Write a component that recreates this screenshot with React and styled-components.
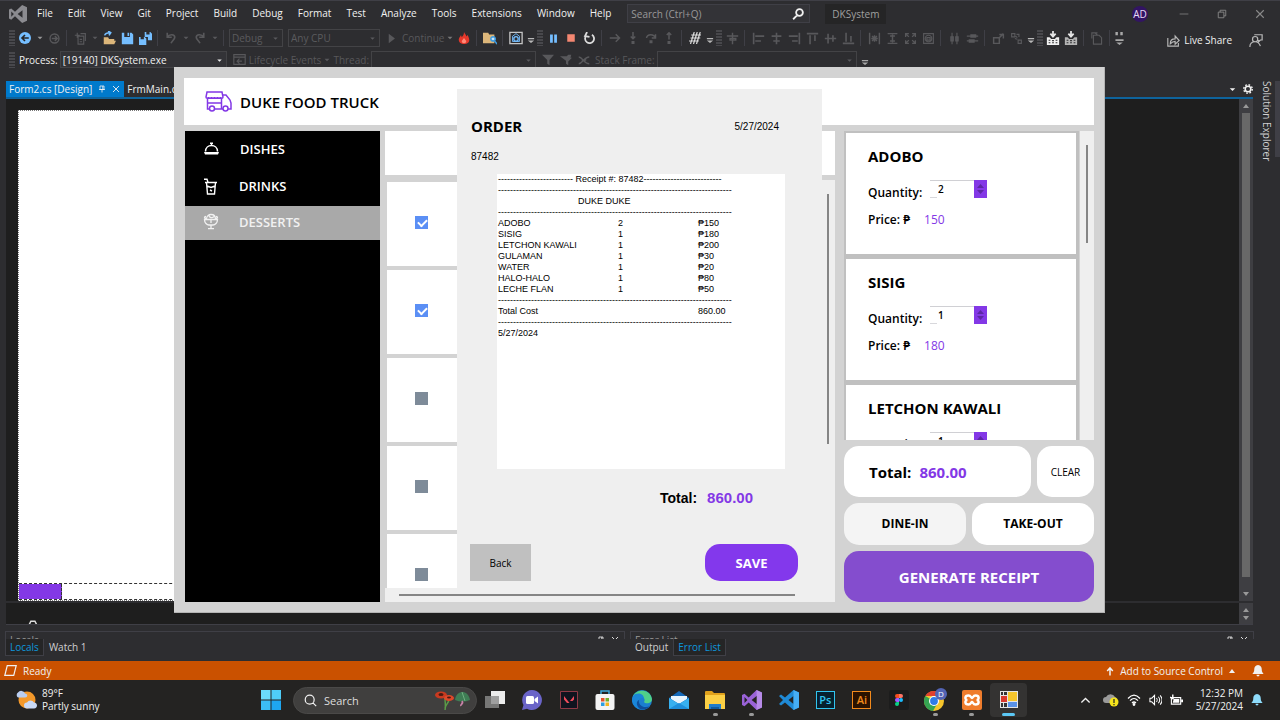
import React from "react";
import styled, { createGlobalStyle, css } from "styled-components";

const ui = '"Open Sans", "Noto Sans", sans-serif';
const arial = '"Liberation Sans", Arial, sans-serif';
const purple = "#8338e6";

const GlobalStyle = createGlobalStyle`
  * { box-sizing: border-box; }
  body { margin: 0; background: #2d2d30; font-family: ${ui}; font-size: 10px; color: #f1f1f1; }
  button, input, select { font: inherit; color: inherit; border: 0; margin: 0; padding: 0; background: none; border-radius: 0; }
  h1, h2, h3, p { margin: 0; }
`;

/* ---------- shared ---------- */

const Desktop = styled.div`
  position: relative;
  min-height: 100vh;
  display: flex;
  flex-direction: column;
  overflow: hidden;
`;

const Svg = styled.svg`
  display: block;
  flex: none;
  fill: ${(p) => (p.$solid ? "currentColor" : "none")};
  stroke: ${(p) => (p.$solid ? "none" : "currentColor")};
  stroke-width: ${(p) => p.$stroke || 1.4};
`;

const glyphs = {
  caret: { solid: true, d: "M4 6h8l-4 4z" },
  up: { solid: true, d: "M2 12h12L8 4z" },
  down: { solid: true, d: "M2 4h12l-6 8z" },
  overflow: { solid: true, d: "M3 8h10v2H3zM3 12h10l-5 4z" },
  overflowDots: { solid: true, d: "M3 0h3v4H3zM9 0h3v4H9zM3 9h10v2H3zM4 13h8l-4 3z" },
  fwd: { d: "M8 1.5a6.5 6.5 0 100 13 6.5 6.5 0 000-13zM4 8h8M8.500 4.500L12 8l-3.500 3.500", stroke: 2 },
  newItem: { d: "M5 5h7v10H5zM8 2h6v9M1 4h6M4 1v6M7 9h3M7 12h3" },
  undo: { d: "M3 1v6h6M3 7c3-5 10-4 10 0 0 3-3 4-5 8", stroke: 2.2 },
  redo: { d: "M13 1v6H7M13 7C10 2 3 3 3 7c0 3 3 4 5 8", stroke: 2.2 },
  play: { solid: true, d: "M4 1l9 7-9 7z" },
  pause: { solid: true, d: "M3 2h4v12H3zM9 2h4v12H9z" },
  stop: { solid: true, d: "M2 2h12v12H2z" },
  restart: { d: "M4 4.500a5.500 5.500 0 107-1M5 0L2.500 5 8 6", stroke: 2.2 },
  arrow: { d: "M1 8h13M9 3l5 5-5 5", stroke: 2 },
  into: { d: "M8 0v9M5 6l3 3 3-3M7 13h2v2H7z", stroke: 2 },
  over: { d: "M2 8c1-6 10-6 12 0M14 3v5H9M7 12h2v2H7z", stroke: 2 },
  out: { d: "M8 10V1M5 4l3-3 3 3M7 13h2v2H7z", stroke: 2 },
  hash: { d: "M7 0L2 16M11 0L6 16M15 0l-5 16M3 4h13M2 8h13M0 12h13", stroke: 1.6 },
  grid: { d: "M8 1v14M1 5h14M5 8h7v2H5z", stroke: 1.8 },
  alignL: { d: "M2 1v14M4 5h11M4 11h7", stroke: 2 },
  alignC: { d: "M8 1v14M2 5h12M4 11h8", stroke: 2 },
  alignR: { d: "M14 1v14M1 5h11M5 11h7", stroke: 2 },
  alignT: { d: "M1 2h14M5 4v11M11 4v7", stroke: 2 },
  alignM: { d: "M1 8h14M5 2v12M11 4v8", stroke: 2 },
  alignB: { d: "M1 14h14M5 1v11M11 5v7", stroke: 2 },
  sameW: { d: "M2 1v14M14 1v14M4 8h8M8 4v8M5 5l6 6M11 5l-6 6", stroke: 1.8 },
  sameH: { d: "M2 2h12M2 14h12M8 3v10M5 5h6M5 11h6", stroke: 1.8 },
  expand: { d: "M2 6V2h4M10 2h4v4M14 10v4h-4M6 14H2v-4M3 3l3 3M13 3l-3 3M13 13l-3-3M3 13l3-3", stroke: 1.6 },
  lockGrid: { d: "M2 2h12v12H2zM8 4a4 4 0 100 8 4 4 0 000-8zM6 7h4v3H6z" },
  hspace: { d: "M5 1v14M11 1v14M3.500 6h3v5h-3zM9.500 6h3v5h-3z" },
  vspace: { d: "M1 5h14M1 11h14M6 3.500h6v3H6zM4 9.500h6v3H4z" },
  front: { d: "M2 7h7v7H2zM9 3h5v5M14 2l-5 5", stroke: 1.8 },
  back: { d: "M2 2h4v4H2zM10 10h4v4h-4zM7 5l2 2M9 9l-3-1M8 3h3v3" },
  merge: { d: "M3 4h7l3 3v8H3zM1 8V1h7M5 1l3 3" },
  filter: { solid: true, d: "M0 1h16l-6 7v7l-3-2V8z" },
  filter2: { solid: true, d: "M0 3h9l2-2h4l-1 4h2l-5 5v5l-3-2V9z" },
  cross: { d: "M1 4c5 0 7 9 14 9M1 13c5 0 7-9 14-9M5 8h6", stroke: 1.8 },
  lifecycle: { d: "M1 2h14v12H1zM1 5h14M5 10h6M8 7l-3 3 3 3" },
  pin: { d: "M4 2h8v7H4zM9.500 2v7M2 9h12M8 9v6", stroke: 1.6 },
  close: { d: "M2 2l12 12M14 2L2 14", stroke: 1.8 },
  minimise: { d: "M1 8h14", stroke: 1.2 },
  restore: { d: "M2 5h9v9H2zM5 5V2h9v9h-3", stroke: 1.4 },
  search: { d: "M10 1.500a4.500 4.500 0 100 9 4.500 4.500 0 000-9zM7 9.500L1.500 15", stroke: 2.4 },
  lens: { d: "M7 1.500a5.500 5.500 0 100 11 5.500 5.500 0 000-11zM11 11l4 4", stroke: 1.5 },
  share: { d: "M1 5v10h13v-4M4 12c0-4 2-6 6-6V2.500L15 8l-5 4.500V9c-3 0-4 1-6 3z" },
  feedback: { d: "M4 7a3 3 0 106 0 3 3 0 10-6 0M1 16c0-4 2-6 6-6s5 2 6 5M6 2h9v6h-2l-2 2V8", stroke: 1.4 },
  parallelogram: { d: "M4 2h11l-3 12H1z", stroke: 1.5 },
  push: { d: "M8 15V3M3.500 8L8 3l4.500 5", stroke: 2.4 },
  bell: { solid: true, d: "M8 0C4.500 0 3 3 3 6c0 3-1 4-2.500 6h15C14 10 13 9 13 6c0-3-1.500-6-5-6zM6 13h4c0 3-4 3-4 0z" },
  chevron: { d: "M2 11l6-6 6 6", stroke: 1.8 },
  tray: { d: "M3 16v-6l3-6h5l3 6v6M3 10h11M6 4h5", stroke: 1.8 },
};

function Glyph({ name, size = 12, label }) {
  const g = glyphs[name];
  return (
    <Svg
      viewBox="0 0 16 16"
      width={size}
      height={size}
      $solid={g.solid}
      $stroke={g.stroke}
      role={label ? "img" : undefined}
      aria-label={label}
      aria-hidden={label ? undefined : true}
    >
      <path d={g.d} />
    </Svg>
  );
}

/* ---------- menu bar ---------- */

const MenuBar = styled.header`
  display: flex;
  align-items: center;
  height: 26px;
  padding: 0 15px 0 9px;
  border-top: 1px solid #3f3f46;
`;

const MenuList = styled.nav`
  display: flex;
  gap: 15px;
  margin-left: 10px;
`;

const MenuItem = styled.button`
  line-height: 16px;
  padding-bottom: 1px;
  white-space: nowrap;
`;

const QuickSearch = styled.label`
  display: flex;
  align-items: center;
  width: 183px;
  height: 19px;
  margin-left: 16px;
  padding: 0 5px 0 3px;
  background: #333337;
  border: 1px solid #3f3f46;
  input { flex: 1; min-width: 0; outline: 0; }
  input::placeholder { color: #999; opacity: 1; }
`;

const SolutionName = styled.span`
  margin-left: 15px;
  padding: 0 7px;
  line-height: 20px;
  background: #252526;
  color: #a0a0a0;
`;

const WindowControls = styled.div`
  display: flex;
  align-items: center;
  gap: 28px;
  margin-left: auto;
  color: #8a8a8a;
`;

const Avatar = styled.span`
  width: 16px;
  height: 16px;
  margin-right: 3px;
  border-radius: 50%;
  background: #321463;
  color: #e6dcf5;
  line-height: 16px;
  text-align: center;
`;

/* ---------- tool bars ---------- */

const ToolBar = styled.div`
  display: flex;
  align-items: center;
  height: ${(p) => p.$height || 24}px;
  padding-left: 8px;
  color: #58585b;
  white-space: nowrap;
`;

const Grip = styled.span`
  flex: none;
  width: 8px;
  height: 16px;
  padding: 0 1px;
  background: radial-gradient(circle at 1px 1px, #48484c 1px, transparent 1px) 0 0 / 2px 3px content-box;
`;

const ToolButton = styled.button`
  flex: none;
  display: flex;
  align-items: center;
  justify-content: center;
  width: ${(p) => (p.$narrow ? 11 : 18)}px;
  height: 18px;
  color: ${(p) => p.$color || "inherit"};
`;

const Separator = styled.span`
  flex: none;
  width: 8px;
  height: 16px;
  border-right: 4px solid transparent;
  border-left: 3px solid transparent;
  background: #3f3f46;
  background-clip: padding-box;
`;

const SelectFrame = styled.div`
  position: relative;
  flex: none;
  width: ${(p) => p.$width}px;
  height: ${(p) => p.$height || 18}px;
  margin-left: ${(p) => p.$gap || 5}px;
  border: 1px solid #434346;
  color: ${(p) => (p.$active ? "#f1f1f1" : "#5b5b5e")};
  background: ${(p) => (p.$active ? "#333337" : "transparent")};
  select { appearance: none; width: 100%; height: 100%; padding-left: 2px; opacity: 1; outline: 0; line-height: 14px; display: block; }
  svg { position: absolute; right: 2px; top: 4px; pointer-events: none; }
`;

const ToolLabel = styled.span`
  flex: none;
  margin-left: ${(p) => p.$gap || 0}px;
  color: ${(p) => (p.$active ? "#f1f1f1" : "inherit")};
`;

const ToolEnd = styled.div`
  display: flex;
  align-items: center;
  gap: 4px;
  margin-left: auto;
  padding: 4px 17px 0 0;
  color: #f1f1f1;
  svg { color: #b8b8b8; }
  svg:last-child { margin-left: 13px; }
`;

function ToolSelect({ label, value, ...rest }) {
  return (
    <SelectFrame {...rest}>
      <select aria-label={label} defaultValue={value}>
        <option>{value}</option>
      </select>
      <Glyph name="caret" size={9} />
    </SelectFrame>
  );
}

const BackIcon = () => (
  <svg width="12" height="12" viewBox="0 0 16 16" aria-hidden="true">
    <circle cx="8" cy="8" r="8" fill="#75beff" />
    <path d="M13 8H4M8 4L4 8l4 4" stroke="#252526" strokeWidth="2.200" fill="none" />
  </svg>
);
const OpenIcon = () => (
  <svg width="14" height="14" viewBox="0 0 16 16" aria-hidden="true">
    <path d="M2 15V7h5l1 2h6v2H6l-2 4zM4 15l2-4h10l-2 4z" fill="#dcb67a" />
    <path d="M3 5c1-3 4-3 6-3M7 0l3 2-2 3" stroke="#75beff" strokeWidth="1.800" fill="none" />
  </svg>
);
const SaveIcon = ({ all }) => (
  <svg width="13" height="13" viewBox="0 0 16 16" aria-hidden="true" fill="#75beff">
    {all ? (
      <path d="M7 0h2v3h4V0h1l2 2v8h-5V6H7zM0 6h2v3h4V6h1l2 2v8H0z" />
    ) : (
      <path d="M1 1h3v5h7V1h2l2 2v12H1zM8 1h2v4H8z" />
    )}
  </svg>
);
const FlameIcon = () => (
  <svg width="12" height="14" viewBox="0 0 16 16" aria-hidden="true">
    <path d="M8 0c1 3 3 3 3 6l2-2c1 3 2 4 2 7 0 3-3 5-7 5s-7-2-7-6c0-2 2-4 3-6l1 3c2-2 3-4 3-7z" fill="#e5382b" />
    <path d="M8 8l3 4c0 4-6 4-6 0z" fill="#ff8a78" />
  </svg>
);
const FolderFindIcon = () => (
  <svg width="14" height="14" viewBox="0 0 16 16" aria-hidden="true">
    <path d="M0 2h6l1 2h6v10H0z" fill="#dcb67a" />
    <path d="M9 9a2.500 2.500 0 105 0 2.500 2.500 0 10-5 0M13 11l3 4" stroke="#3d9be0" strokeWidth="1.800" fill="#cfe6f8" />
  </svg>
);
const CameraIcon = () => (
  <svg width="14" height="14" viewBox="0 0 16 16" aria-hidden="true" fill="none">
    <path d="M1 1.500h14v13H1z" stroke="#c5c5c5" strokeWidth="1.500" />
    <path d="M4 12V6l4-3 4 3v6z" stroke="#75beff" />
    <circle cx="8" cy="9" r="2.500" stroke="#75beff" strokeWidth="1.500" />
  </svg>
);
const DepositIcon = ({ faint }) => (
  <svg width="14" height="14" viewBox="0 0 16 16" aria-hidden="true">
    <path d="M8 0v6M5 3l3 3.500L11 3" stroke="#e6e6e6" strokeWidth="2" fill="none" />
    <path d="M1 7h3l2 2h4l2-2h3v9H1z" fill={faint ? "#b4b4b4" : "#f1f1f1"} />
    <path d="M3 10.500h2M7 11h2M11 10.500h2M3 13.500h2M7 13.500h2M11 13.500h2" stroke="#2d2d30" strokeWidth="1.200" />
  </svg>
);

const menus = ["File", "Edit", "View", "Git", "Project", "Build", "Debug", "Format", "Test", "Analyze", "Tools", "Extensions", "Window", "Help"];

const layoutTools = [
  "grid", "|", "alignL", "alignC", "alignR", "alignT", "alignM", "alignB", "|",
  "sameW", "sameH", "expand", "lockGrid", "|", "hspace", "vspace", "|", "front", "back",
];

function Tool({ name, narrow, color, children, size }) {
  return (
    <ToolButton $narrow={narrow} $color={color} aria-label={name}>
      {children || <Glyph name={name} size={size || (narrow ? 10 : 13)} />}
    </ToolButton>
  );
}

function IdeBars() {
  return (
    <>
      <MenuBar>
        <svg width="18" height="18" viewBox="0 0 24 24" aria-label="Visual Studio" role="img">
          <path d="M17.500 0L24 3v18l-6.500 3L8 15l-5 4.500-3-1.500V6l3-1.500L8 9zM18 7l-6.500 5 6.500 5zM3 8.500v7L6.500 12z" fill="#8b8b90" fillRule="evenodd" />
        </svg>
        <MenuList>
          {menus.map((m) => (
            <MenuItem key={m}>{m}</MenuItem>
          ))}
        </MenuList>
        <QuickSearch>
          <input type="text" aria-label="Search" placeholder="Search (Ctrl+Q)" />
          <Glyph name="search" size={12} />
        </QuickSearch>
        <SolutionName>DKSystem</SolutionName>
        <WindowControls>
          <Avatar>AD</Avatar>
          <button aria-label="Minimise"><Glyph name="minimise" size={10} /></button>
          <button aria-label="Restore"><Glyph name="restore" size={10} /></button>
          <button aria-label="Close"><Glyph name="close" size={10} /></button>
        </WindowControls>
      </MenuBar>
      <ToolBar>
        <Grip />
        <ToolButton aria-label="Back"><BackIcon /></ToolButton>
        <Tool name="caret" narrow color="#999" />
        <Tool name="fwd" size={11} />
        <Separator />
        <Tool name="newItem" />
        <Tool name="caret" narrow />
        <ToolButton aria-label="Open"><OpenIcon /></ToolButton>
        <ToolButton aria-label="Save"><SaveIcon /></ToolButton>
        <ToolButton aria-label="Save all"><SaveIcon all /></ToolButton>
        <Separator />
        <Tool name="undo" size={12} />
        <Tool name="caret" narrow />
        <Tool name="redo" size={12} />
        <Tool name="caret" narrow />
        <Separator />
        <ToolSelect label="Configuration" value="Debug" $width={54} $gap={1} />
        <ToolSelect label="Platform" value="Any CPU" $width={92} />
        <ToolLabel $gap={2}><Tool name="play" size={11} /></ToolLabel>
        <ToolLabel $gap={2}>Continue</ToolLabel>
        <Tool name="caret" narrow color="#777" />
        <ToolButton aria-label="Hot reload"><FlameIcon /></ToolButton>
        <Separator />
        <ToolButton aria-label="Find in files"><FolderFindIcon /></ToolButton>
        <Separator />
        <ToolButton aria-label="Snapshot"><CameraIcon /></ToolButton>
        <Tool name="overflow" narrow color="#b8b8b8" />
        <Grip />
        <Tool name="pause" color="#75beff" size={11} />
        <Tool name="stop" color="#f48771" size={10} />
        <Tool name="restart" color="#dcdcdc" />
        <Separator />
        {["arrow", "into", "over", "out"].map((n) => <Tool key={n} name={n} size={12} />)}
        <Separator />
        <Tool name="hash" color="#dcdcdc" size={12} />
        <Tool name="overflow" narrow color="#b8b8b8" />
        <Grip />
        {layoutTools.map((n, i) => (n === "|" ? <Separator key={i} /> : <Tool key={i} name={n} size={13} />))}
        <Tool name="overflow" narrow color="#b8b8b8" />
        <Grip />
        <ToolButton aria-label="Publish"><DepositIcon /></ToolButton>
        <ToolButton aria-label="Publish all"><DepositIcon faint /></ToolButton>
        <Separator />
        <Tool name="merge" />
        <Separator />
        <Tool name="overflowDots" narrow color="#a8a8a8" size={13} />
        <ToolEnd>
          <Glyph name="share" size={13} />
          <button>Live Share</button>
          <Glyph name="feedback" size={14} />
        </ToolEnd>
      </ToolBar>
      <ToolBar $height={19}>
        <Grip />
        <ToolLabel $gap={3} $active>Process:</ToolLabel>
        <ToolSelect label="Process" value="[19140] DKSystem.exe" $width={167} $height={17} $gap={2} $active />
        <ToolLabel $gap={4}><Tool name="lifecycle" /></ToolLabel>
        <ToolLabel>Lifecycle Events</ToolLabel>
        <Tool name="caret" narrow />
        <ToolLabel $gap={1}>Thread:</ToolLabel>
        <ToolSelect label="Thread" value="" $width={165} $height={17} $gap={2} />
        <ToolLabel $gap={3}><Tool name="filter" size={12} /></ToolLabel>
        <Tool name="filter2" size={12} />
        <Tool name="cross" size={12} />
        <ToolLabel $gap={2}>Stack Frame:</ToolLabel>
        <ToolSelect label="Stack Frame" value="" $width={200} $height={17} $gap={2} />
        <ToolLabel $gap={3}><Tool name="overflow" narrow color="#a8a8a8" /></ToolLabel>
      </ToolBar>
    </>
  );
}

/* ---------- editor ---------- */

const WorkArea = styled.div`
  flex: 1;
  display: flex;
  min-height: 544px;
  padding-left: 6px;
  margin-top: 12px;
`;

const Documents = styled.main`
  flex: 1;
  display: flex;
  flex-direction: column;
  min-width: 0;
`;

const TabStrip = styled.div`
  display: flex;
  align-items: center;
  height: 18px;
  border-bottom: 2px solid #0e639c;
  font-size: 10px;
  line-height: 16px;
`;

const DocTab = styled.button`
  display: flex;
  align-items: center;
  gap: 6px;
  height: 16px;
  padding: 0 4px 0 3px;
  background: ${(p) => (p.$active ? "#007acc" : "transparent")};
`;

const TabTools = styled.div`
  display: flex;
  align-items: center;
  gap: 5px;
  margin-left: auto;
`;

const Designer = styled.div`
  flex: 1;
  display: flex;
  justify-content: space-between;
  background: #1e1e1e;
`;

const FormSurface = styled.div`
  width: 75%;
  display: flex;
  flex-direction: column;
  margin: 11px 0 0 12px;
  border: 1px dotted #777;
  border-right: 0;
  background: #fff;
`;

const FormStrip = styled.div`
  height: 17px;
  margin-top: auto;
  border: dashed #333;
  border-width: 1px 0;
  &::before {
    content: "";
    display: block;
    width: 42px;
    height: 100%;
    background: ${purple};
    border-right: 1px dashed #333;
  }
`;

const VScroll = styled.div`
  display: flex;
  flex-direction: column;
  align-items: center;
  justify-content: space-between;
  width: 14px;
  padding: 3px 0;
  background: #3e3e42;
  color: #999;
  i { flex: 1; width: 8px; margin: 3px 0 13px; background: #686868; }
`;

const Tray = styled.div`
  display: flex;
  justify-content: space-between;
  height: 24px;
  overflow: hidden;
  background: #1e1e1e;
  border-top: 2px solid #2d2d30;
  border-bottom: 1px solid #3f3f46;
`;

const TrayItem = styled.span`
  margin: 15px 0 0 20px;
  color: #ddd;
`;

const Rail = styled.aside`
  width: 27px;
  padding-left: 6px;
`;

const RailTab = styled.button`
  writing-mode: vertical-rl;
  width: 21px;
  height: 76px;
  line-height: 14px;
  text-align: left;
  border-right: 5px solid #3f3f46;
  color: #d0d0d0;
  font-size: 10px;
  white-space: nowrap;
`;

const Panels = styled.section`
  display: grid;
  grid-template-columns: 620fr 624fr;
  gap: 5px;
  height: 36px;
  padding: 6px 26px 0 5px;
`;

const Panel = styled.div`
  min-width: 0;
`;

const PanelTitle = styled.div`
  display: flex;
  justify-content: space-between;
  height: 8px;
  padding: 0 5px 0 4px;
  overflow: hidden;
  border: solid #3f3f46;
  border-width: 1px 1px 0;
  line-height: 17px;
  color: #999;
  span { display: flex; gap: 6px; padding-top: 4px; color: #f1f1f1; }
`;

const PanelTabs = styled.div`
  display: flex;
`;

const PanelTab = styled.button`
  height: 17px;
  padding: 0 4px;
  line-height: 15px;
  color: ${(p) => (p.$active ? "#0e97dd" : "#d0d0d0")};
  background: ${(p) => (p.$active ? "#252526" : "transparent")};
  border: 1px solid ${(p) => (p.$active ? "#3f3f46" : "transparent")};
  border-top: 0;
`;

function PanelBox({ title, tabs, active }) {
  return (
    <Panel>
      <PanelTitle>
        {title}
        <span><Glyph name="pin" size={8} /><Glyph name="close" size={8} /></span>
      </PanelTitle>
      <PanelTabs>
        {tabs.map((t) => <PanelTab key={t} $active={t === active}>{t}</PanelTab>)}
      </PanelTabs>
    </Panel>
  );
}

const StatusBar = styled.div`
  display: flex;
  align-items: center;
  gap: 6px;
  height: 19px;
  padding: 0 16px 0 4px;
  background: #ca5100;
  button { display: flex; align-items: center; gap: 5px; }
  button:first-of-type { margin-left: auto; margin-right: 10px; }
`;

/* ---------- order window ---------- */

const AppWindow = styled.div`
  position: absolute;
  top: 67px;
  left: 174px;
  right: 175px;
  padding: 11px 11px 11px 10px;
  background: #d3d3d3;
  box-shadow: inset -1px -1px #b4b4b4;
  color: #000;
`;

const AppHeader = styled.div`
  display: flex;
  align-items: center;
  gap: 8px;
  height: 47px;
  padding-left: 21px;
  background: #fff;
  h1 { font-size: 15px; line-height: 20px; font-weight: 600; }
`;

const AppBody = styled.div`
  display: flex;
  height: 471px;
  margin: 6px 0 0 1px;
`;

const SideBar = styled.nav`
  width: 195px;
  flex: none;
  background: #000;
`;

const SideItem = styled.button`
  display: flex;
  align-items: center;
  gap: 20px;
  width: 100%;
  height: ${(p) => p.$height || 37}px;
  padding: 0 0 3px 18px;
  font-size: 13px;
  font-weight: 600;
  color: ${(p) => (p.$active ? "#f1f1f1" : "#fff")};
  background: ${(p) => (p.$active ? "#a9a9a9" : "transparent")};
`;

const Menu = styled.div`
  flex: 1;
  display: flex;
  flex-direction: column;
  min-width: 0;
  margin: 0 9px 0 5px;
`;

const MenuHead = styled.div`
  height: 44px;
  margin-bottom: 5px;
  background: #fff;
`;

const MenuScroller = styled.div`
  flex: 1;
  display: flex;
  min-height: 0;
`;

const ProductList = styled.div`
  flex: 1;
  display: flex;
  flex-direction: column;
  gap: 4px;
  padding: 2px 0 0 2px;
  overflow: hidden;
`;

const ProductCard = styled.div`
  flex: none;
  display: flex;
  align-items: center;
  height: 84px;
  padding: 0 0 3px 28px;
  background: #fff;
`;

const Tick = styled.input`
  appearance: none;
  position: relative;
  width: 13px;
  height: 13px;
  background: #7e8b99;
  &:checked { background: #5b8ff5; }
  &:checked::after {
    content: "";
    position: absolute;
    left: 3px;
    top: 3px;
    width: 7px;
    height: 4px;
    border: solid #fff;
    border-width: 0 0 2px 2px;
    transform: rotate(-45deg);
  }
`;

const Track = styled.div`
  flex: none;
  background: #efefef;
  ${(p) =>
    p.$across
      ? css`height: 14px; padding: 6px 40px 6px 14px;`
      : css`width: 14px; padding: ${p.$pad} 6px 0;`}
  &::before {
    content: "";
    display: block;
    width: ${(p) => (p.$across ? "100%" : "2px")};
    height: ${(p) => (p.$across ? "2px" : p.$thumb + "px")};
    background: #858585;
  }
`;

const Cart = styled.div`
  flex: none;
  width: 250px;
  display: flex;
  flex-direction: column;
  gap: 6px;
`;

const CartScroller = styled.div`
  flex: 1;
  display: flex;
  min-height: 0;
  overflow: hidden;
`;

const CartList = styled.div`
  flex: 1;
  display: flex;
  flex-direction: column;
  gap: 5px;
  margin-right: 1px;
  padding: 2px 3px 0 2px;
  overflow: hidden;
  background: #c0c0c0;
`;

const CartCard = styled.div`
  flex: none;
  height: 121px;
  padding: 12px 0 0 22px;
  background: #fff;
  font-size: 12px;
  font-weight: 600;
  h3 { font-size: 15px; line-height: 22px; font-weight: 700; }
`;

const QuantityRow = styled.label`
  display: flex;
  align-items: center;
  height: 20px;
  margin-top: 15px;
`;

const QuantityLabel = styled.span`
  width: 62px;
`;

const QuantityField = styled.span`
  display: flex;
  width: 57px;
  height: 18px;
  margin-bottom: 6px;
  background: linear-gradient(#d0d0d4, #d0d0d4) 0 0 / 44px 1px no-repeat, linear-gradient(#d8d8dc, #d8d8dc) 0 100% / 7px 1px no-repeat;
  input { appearance: none; width: 44px; padding-left: 8px; font-size: 10px; outline: 0; }
  span { display: flex; flex-direction: column; align-items: center; justify-content: center; gap: 2px; width: 13px; background: ${purple}; color: #5c27a5; }
`;

const Price = styled.p`
  display: flex;
  gap: 14px;
  margin-top: 8px;
  line-height: 20px;
  b { font-weight: 400; color: ${purple}; }
`;

const CartRow = styled.div`
  flex: none;
  display: flex;
  gap: 6px;
`;

const TotalCard = styled.div`
  flex: 1;
  display: flex;
  align-items: center;
  gap: 8px;
  height: 51px;
  padding-left: 25px;
  border-radius: 15px;
  background: #fff;
  font-size: 15px;
  font-weight: 700;
  b { font-weight: inherit; color: ${purple}; }
`;

const RoundButton = styled.button`
  flex: ${(p) => (p.$width ? "none" : 1)};
  width: ${(p) => (p.$width ? p.$width + "px" : "auto")};
  height: ${(p) => p.$height}px;
  border-radius: 15px;
  background: ${(p) => p.$bg || "#fff"};
  color: ${(p) => p.$color || "#000"};
  font-size: ${(p) => p.$size || 12}px;
  font-weight: ${(p) => p.$weight || 700};
  line-height: 20px;
`;

const Dialog = styled.section`
  position: absolute;
  top: 22px;
  left: 0;
  right: 0;
  width: 365px;
  height: 502px;
  margin: 0 auto;
  padding: 27px 24px 0 14px;
  display: flex;
  flex-direction: column;
  background: #efefef;
  font-size: 10px;
`;

const DialogHead = styled.div`
  display: flex;
  align-items: center;
  justify-content: space-between;
  padding-right: 19px;
  font-family: ${arial};
  h2 { font: 700 15px/20px ${ui}; }
`;

const OrderNumber = styled.p`
  margin-top: 15px;
  font-family: ${arial};
  line-height: 12px;
`;

const Receipt = styled.div`
  width: 288px;
  height: 295px;
  margin: 11px 0 0 26px;
  padding-left: 1px;
  background: #fff;
  font: 9px/11px ${arial};
  white-space: pre;
`;

const ReceiptTable = styled.table`
  border-collapse: collapse;
  td { padding: 0; height: 11px; line-height: 11px; }
  td:first-child { width: 120px; }
  td:nth-child(2) { width: 80px; }
`;

const Brand = styled.p`
  padding-left: 80px;
`;

const TotalLine = styled.p`
  display: flex;
  justify-content: flex-end;
  gap: 10px;
  margin: 19px 45px 0 0;
  font: 700 14px/20px ${arial};
  b { font-size: 15px; color: ${purple}; }
`;

const DialogActions = styled.div`
  display: flex;
  align-items: center;
  justify-content: space-between;
  margin: 36px 0 0 -1px;
`;

const BackButton = styled.button`
  width: 61px;
  height: 37px;
  background: #c0c0c0;
`;

const dashes = (n) => "-".repeat(n);

const order = [
  ["ADOBO", 2, 150],
  ["SISIG", 1, 180],
  ["LETCHON KAWALI", 1, 200],
  ["GULAMAN", 1, 30],
  ["WATER", 1, 20],
  ["HALO-HALO", 1, 80],
  ["LECHE FLAN", 1, 50],
];

const TruckIcon = () => (
  <svg width="27" height="21" viewBox="0 0 27 21" fill="none" stroke="#8338e6" strokeWidth="1.500" aria-hidden="true">
    <path d="M2 1h15l1 5c0 1.500-2.500 1.500-2.500 0 0 1.500-3 1.500-3 0 0 1.500-3 1.500-3 0 0 1.500-3 1.500-3 0 0 1.500-3 1.500-3 0C3.500 7.500 1 7.500 1 6z" />
    <path d="M2.500 8v10h2M9.500 18h8.500M16.500 7v11M2.500 12h14M17 4h4l4 5 1 3v6h-3" />
    <circle cx="7" cy="17.500" r="2.500" />
    <circle cx="20.500" cy="17.500" r="2.500" />
  </svg>
);
const DishIcon = () => (
  <svg width="17" height="14" viewBox="0 0 17 14" fill="none" stroke="currentColor" strokeWidth="1.500" aria-hidden="true">
    <path d="M2.500 9.500c0-8 12-8 12 0M8.500 3V1M7 1.200h3" />
    <path d="M1 10h15l-1 2.500H2z" fill="currentColor" stroke="none" />
  </svg>
);
const DrinkIcon = () => (
  <svg width="16" height="17" viewBox="0 0 16 17" fill="none" stroke="currentColor" strokeWidth="1.400" aria-hidden="true">
    <path d="M1 1.200h3l1 3M2 4.500h12M3.500 4.500L4.500 16h7l1-11.500M4 8l4 1.500 4-1.500M7 12l2 1" />
  </svg>
);
const DessertIcon = () => (
  <svg width="16" height="17" viewBox="0 0 16 17" fill="none" stroke="currentColor" strokeWidth="1.300" aria-hidden="true">
    <path d="M3.500 6c0-6 9-6 9 0M1.500 6.500h13c0 3.500-2.500 5.500-4.500 5.500H6c-2 0-4.500-2-4.500-5.500zM8 12v3.500M5 15.700h6M6 2.500c0 2 3 3 5 1M8 7v3" />
    <path d="M3 5.500c-2 0-2-2 0-2M13 5.500c2 0 2-2 0-2" />
  </svg>
);
const ArrowPair = () => (
  <span aria-hidden="true">
    <svg width="7" height="4" viewBox="0 0 7 4" fill="currentColor"><path d="M0 4h7L3.500 0z" /></svg>
    <svg width="7" height="4" viewBox="0 0 7 4" fill="currentColor"><path d="M0 0h7L3.500 4z" /></svg>
  </span>
);

function OrderWindow() {
  return (
    <AppWindow>
      <AppHeader>
        <TruckIcon />
        <h1>DUKE FOOD TRUCK</h1>
      </AppHeader>
      <AppBody>
        <SideBar>
          <SideItem $height={38}><DishIcon />DISHES</SideItem>
          <SideItem><DrinkIcon />DRINKS</SideItem>
          <SideItem $height={34} $active><DessertIcon />DESSERTS</SideItem>
        </SideBar>
        <Menu>
          <MenuHead />
          <MenuScroller>
            <ProductList>
              {[true, true, false, false, false].map((on, i) => (
                <ProductCard key={i}>
                  <Tick type="checkbox" defaultChecked={on} aria-label={`Product ${i + 1}`} />
                </ProductCard>
              ))}
            </ProductList>
            <Track $pad="14px" $thumb={250} />
          </MenuScroller>
          <Track $across />
        </Menu>
        <Cart>
          <CartScroller>
            <CartList>
              {order.slice(0, 3).map(([name, qty, price]) => (
                <CartCard key={name}>
                  <h3>{name}</h3>
                  <QuantityRow>
                    <QuantityLabel>Quantity:</QuantityLabel>
                    <QuantityField>
                      <input type="text" defaultValue={qty} />
                      <ArrowPair />
                    </QuantityField>
                  </QuantityRow>
                  <Price>Price: ₱<b>{price}</b></Price>
                </CartCard>
              ))}
            </CartList>
            <Track $pad="14px" $thumb={98} />
          </CartScroller>
          <CartRow>
            <TotalCard>Total:<b>860.00</b></TotalCard>
            <RoundButton $width={57} $height={51} $size={10} $weight={400}>CLEAR</RoundButton>
          </CartRow>
          <CartRow>
            <RoundButton $height={42} $bg="#f4f4f4">DINE-IN</RoundButton>
            <RoundButton $height={42}>TAKE-OUT</RoundButton>
          </CartRow>
          <CartRow>
            <RoundButton $height={51} $bg="#844dce" $color="#fff" $size={15}>GENERATE RECEIPT</RoundButton>
          </CartRow>
        </Cart>
      </AppBody>
      <Dialog aria-label="Order">
        <DialogHead>
          <h2>ORDER</h2>
          <span>5/27/2024</span>
        </DialogHead>
        <OrderNumber>87482</OrderNumber>
        <Receipt>
          <p>{dashes(25)} Receipt #: 87482{dashes(26)}</p>
          <p>{dashes(78)}</p>
          <Brand>DUKE DUKE</Brand>
          <p>{dashes(78)}</p>
          <ReceiptTable>
            <tbody>
              {order.map(([name, qty, price]) => (
                <tr key={name}>
                  <td>{name}</td>
                  <td>{qty}</td>
                  <td>₱{price}</td>
                </tr>
              ))}
            </tbody>
          </ReceiptTable>
          <p>{dashes(78)}</p>
          <ReceiptTable>
            <tbody>
              <tr>
                <td>Total Cost</td>
                <td />
                <td>860.00</td>
              </tr>
            </tbody>
          </ReceiptTable>
          <p>{dashes(78)}</p>
          <p>5/27/2024</p>
        </Receipt>
        <TotalLine>Total:<b>860.00</b></TotalLine>
        <DialogActions>
          <BackButton>Back</BackButton>
          <RoundButton $width={93} $height={37} $bg="#8338ec" $color="#fff" $size={13}>SAVE</RoundButton>
        </DialogActions>
      </Dialog>
    </AppWindow>
  );
}

/* ---------- task bar ---------- */

const TaskBar = styled.footer`
  display: flex;
  align-items: center;
  height: 40px;
  padding: 0 17px 0 15px;
  background: #242322;
`;

const Weather = styled.button`
  display: flex;
  align-items: center;
  gap: 5px;
  width: 246px;
  line-height: 13px;
  text-align: left;
`;

const SearchPill = styled.label`
  display: flex;
  align-items: center;
  gap: 7px;
  width: 184px;
  height: 27px;
  margin-left: 12px;
  padding: 0 6px 0 10px;
  border-radius: 14px;
  background: #403f3e;
  border: 1px solid #4a4948;
  input { flex: 1; min-width: 0; font-size: 11px; outline: 0; }
  input::placeholder { color: #ddd; opacity: 1; }
`;

const Apps = styled.div`
  display: grid;
  grid-template-columns: repeat(15, 1fr);
  width: 550px;
`;

const AppButton = styled.button`
  position: relative;
  display: flex;
  align-items: center;
  justify-content: center;
  height: 34px;
  border-radius: 4px;
  background: ${(p) => (p.$state === "active" ? "#343332" : "transparent")};
  &::after {
    content: "";
    position: absolute;
    bottom: 1px;
    width: ${(p) => (p.$state === "active" ? 13 : 5)}px;
    height: 3px;
    border-radius: 2px;
    background: ${(p) => (p.$state === "active" ? "#5cc8f5" : p.$state === "open" ? "#999" : "transparent")};
  }
`;

const SystemTray = styled.div`
  display: flex;
  align-items: center;
  gap: 8px;
  margin-left: auto;
  > svg:first-child { margin-right: 4px; }
`;

const Clock = styled.time`
  margin-left: 5px;
  line-height: 13px;
  text-align: right;
`;

const BlueBell = styled.span`
  color: #8fdcfb;
`;

const Tile = styled.span`
  width: 19px;
  height: 18px;
  border: 1px solid ${(p) => p.$color};
  background: ${(p) => p.$bg};
  color: ${(p) => p.$color};
  font-size: 11px;
  font-weight: 600;
  line-height: 15px;
`;

const box = { width: 20, height: 20, viewBox: "0 0 20 20", "aria-hidden": true };

const taskApps = [
  ["Task view", null, <svg {...box}><path d="M6 1h14v13H6z" fill="#ececec" /><path d="M0 6h14v12H0z" fill="#8c8c8c" fillOpacity=".8" /></svg>],
  ["Chat", null, <svg {...box}><path d="M10 0a10 10 0 11-5 18.700L0 20l1.500-5A10 10 0 0110 0z" fill="#6a64c8" /><rect x="4" y="6" width="8" height="8" rx="1.500" fill="#fff" /><path d="M12.500 9l3.500-2.500v7L12.500 11z" fill="#fff" /></svg>],
  ["Valorant", null, <svg {...box}><path d="M1.500 1.500h17v17h-17z" fill="#10141f" stroke="#8e3a46" /><path d="M5 6l5.500 7H8L5 9.500zM15 6v3.500L13.500 11H11z" fill="#f04c5c" /></svg>],
  ["Store", null, <svg {...box}><path d="M6 4V1h8v3" stroke="#3ba7d8" strokeWidth="1.500" fill="none" /><rect x="0.5" y="4" width="19" height="16" rx="2" fill="#f3f3f3" /><path d="M6 8h3.500v3.500H6z" fill="#e2502a" /><path d="M10.500 8H14v3.500h-3.500z" fill="#6fae2c" /><path d="M6 12.500h3.500V16H6z" fill="#2b9de0" /><path d="M10.500 12.500H14V16h-3.500z" fill="#f2b51d" /></svg>],
  ["Edge", null, <svg {...box}><circle cx="10" cy="10" r="10" fill="#1b7fcf" /><path d="M1 6C4-1 18-2 20 9c0 5-7 5-8 3 2-3-1-6-4-6S2 8 1 6z" fill="#4fd08a" /><path d="M1 6c3-4 11-3 11 3-2-2-5-1-5 2 0 4 5 7 11 5-4 6-16 5-18-5 0-2 0-3 1-5z" fill="#1a86d9" /><path d="M7 10c-1 5 5 9 11 6-3 4-8 4-10 3-4-3-4-8-1-9z" fill="#0f4f9c" /></svg>],
  ["Mail", null, <svg {...box}><path d="M0 8l10-7 10 7v11H0z" fill="#1468b8" /><path d="M2 6h16v3l-8 5-8-5z" fill="#e8f4fd" /><path d="M0 8l10 6 10-6v11H0z" fill="#37b0f0" /><path d="M0 19l10-6 10 6z" fill="#1f8fdc" /></svg>],
  ["Files", "open", <svg {...box}><path d="M0 2c0-1 1-1 1-1h6l2 2h10c1 0 1 1 1 1v14H0z" fill="#e0a11c" /><path d="M0 5h20v14H0z" fill="#fbcf45" /><path d="M4 14h12v5H4z" fill="#1f7ccb" /><path d="M6 17h8v2H6z" fill="#0f5a9e" /></svg>],
  ["Visual Studio", "open", <svg {...box} viewBox="0 0 24 24"><path d="M17.500 0L24 3v18l-6.500 3L8 15l-5 4.500-3-1.500V6l3-1.500L8 9zM18 7l-6.500 5 6.500 5zM3 8.500v7L6.500 12z" fill="#9a62d8" fillRule="evenodd" /><path d="M17.500 0L24 3v18l-6.500 3z" fill="#c39cf0" fillOpacity=".7" /></svg>],
  ["VS Code", null, <svg {...box}><path d="M14.500 0L20 2.500v15L14.500 20 6 12.500 2 15.500l-2-1.500 4-4-4-4 2-1.500 4 3zM14.500 6L9.500 10l5 4z" fill="#1f8ad6" fillRule="evenodd" /><path d="M14.500 0L20 2.500v15L14.500 20z" fill="#46aef5" /></svg>],
  ["Photoshop", null, <Tile $color="#31c5f0" $bg="#06202e">Ps</Tile>],
  ["Illustrator", null, <Tile $color="#f28a1c" $bg="#2b1200">Ai</Tile>],
  ["Figma", null, <svg {...box}><rect width="20" height="20" rx="3" fill="#1c1c1c" /><path d="M8 4h2v4H8a2 2 0 010-4z" fill="#f24e1e" /><path d="M10 4h2a2 2 0 010 4h-2z" fill="#ff7262" /><path d="M8 8h2v4H8a2 2 0 010-4z" fill="#a259ff" /><circle cx="12" cy="10" r="2" fill="#1abcfe" /><path d="M8 12h2v2a2 2 0 11-2-2z" fill="#0acf83" /></svg>],
  ["Chrome", "open", <svg width="24" height="24" viewBox="0 0 24 24" aria-hidden="true"><circle cx="11" cy="13" r="10" fill="#f7c52b" /><path d="M2.300 8A10 10 0 0010 23l4-7-3-3z" fill="#35a452" /><path d="M2.300 8A10 10 0 0119.700 8H11z" fill="#e0402f" /><circle cx="11" cy="13" r="5" fill="#fff" /><circle cx="11" cy="13" r="3.900" fill="#2e7ce8" /><circle cx="18" cy="6" r="6" fill="#5364b4" /><text x="18" y="9" fontSize="8" fill="#fff" textAnchor="middle">D</text></svg>],
  ["XAMPP", "open", <svg {...box}><rect width="20" height="20" rx="2" fill="#ef7c2c" /><path d="M6.500 5.500c-4 0-4 4.500-1 4.500-3 0-3 4.500 1 4.500 2.500 0 2.500-2.500 3.500-2.500s1 2.500 3.500 2.500c4 0 4-4.500 1-4.500 3 0 3-4.500-1-4.500C11 5.500 11 8 10 8S9 5.500 6.500 5.500z" fill="none" stroke="#fff" strokeWidth="2.400" /></svg>],
  ["DKSystem", "active", <svg {...box}><path d="M1 1h18v17H1z" fill="#e4e4e4" /><path d="M2 6h6v6H2z" fill="#d8372c" /><path d="M9 2h9v9H9z" fill="#f5c52c" /><path d="M9 12h9v5H9z" fill="#5a92e8" /><path d="M2 2h2v3H2zM5 2h3v3H5zM2 13h2v4H2zM5 13h3v4H5z" fill="#333" /></svg>],
];

function Taskbar() {
  return (
    <TaskBar>
      <Weather>
        <svg width="22" height="20" viewBox="0 0 22 20" aria-hidden="true">
          <circle cx="12" cy="10" r="8.500" fill="#f3982a" />
          <path d="M3 7.500a3 3 0 010-5 4 4 0 017 1c3 0 3 4 0 4z" fill="#b9cdf0" />
          <path d="M12 18.500a3 3 0 010-6 4 4 0 017 0c4 0 4 6 0 6z" fill="#c9d9f6" />
        </svg>
        <span>89°F<br />Partly sunny</span>
      </Weather>
      <button aria-label="Start">
        <svg width="20" height="20" viewBox="0 0 20 20" display="block">
          <path d="M0 0h9.500v9.500H0z" fill="#6bdcfb" /><path d="M10.500 0H20v9.500h-9.500z" fill="#4fcdf8" />
          <path d="M0 10.500h9.500V20H0z" fill="#3cbdf5" /><path d="M10.500 10.500H20V20h-9.500z" fill="#1ea6f0" />
        </svg>
      </button>
      <SearchPill>
        <Glyph name="lens" size={13} />
        <input type="text" aria-label="Search" placeholder="Search" />
        <svg width="36" height="20" viewBox="0 0 36 20" aria-hidden="true">
          <path d="M11 8c0 5 1 8 0 12M15 9c0 4-3 5-4 9" stroke="#5b9a48" strokeWidth="1.500" fill="none" />
          <ellipse cx="7" cy="5" rx="6" ry="3.500" fill="#c93a20" /><ellipse cx="7" cy="4.500" rx="2.500" ry="1.500" fill="#4a1a10" />
          <ellipse cx="15" cy="8" rx="5" ry="3" fill="#e0482a" /><ellipse cx="15" cy="7.500" rx="2" ry="1" fill="#4a1a10" />
          <path d="M21 10C22 0 34-1 36 10c-5 2-10 2-15 0z" fill="#3f7d55" />
          <path d="M28 2l3 9" stroke="#6fae80" fill="none" />
          <path d="M28 11c2 3-2 3-1 5" stroke="#c883a8" strokeWidth="1.800" fill="none" />
        </svg>
      </SearchPill>
      <Apps>
        {taskApps.map(([name, state, icon]) => (
          <AppButton key={name} aria-label={name} $state={state}>{icon}</AppButton>
        ))}
      </Apps>
      <SystemTray>
        <Glyph name="chevron" size={11} />
        <svg width="16" height="14" viewBox="0 0 16 14" aria-label="Sync" role="img">
          <path d="M3 10a3 3 0 010-6 5 5 0 019 0c3 1 3 6 0 6z" fill="#9a9a9a" />
          <circle cx="11" cy="9" r="4.500" fill="#f5e41c" /><path d="M11 6v4M11 11v1.200" stroke="#222" strokeWidth="1.200" />
        </svg>
        <svg width="14" height="12" viewBox="0 0 14 12" fill="none" stroke="#fff" strokeWidth="1.200" aria-label="Wi-Fi" role="img">
          <path d="M1 4.500c4-4.500 8-4.500 12 0M3 6.700c3-3 5-3 8 0M5 9c1.500-1.500 2.500-1.500 4 0" /><circle cx="7" cy="10.500" r=".8" fill="#fff" />
        </svg>
        <svg width="13" height="12" viewBox="0 0 14 12" fill="none" stroke="#fff" strokeWidth="1.100" aria-label="Volume" role="img">
          <path d="M1 4h2l3-3v10L3 8H1zM8 4c1 1 1 3 0 4M10 2.500c2 2 2 5 0 7M12 1c2.500 3 2.500 7 0 10" />
        </svg>
        <svg width="13" height="12" viewBox="0 0 14 12" aria-label="Battery" role="img">
          <path d="M1.500 3.500h10v7h-10z" stroke="#fff" fill="none" strokeWidth="1.200" /><path d="M4 5h6v4H3zM12 5.500h2v3h-2z" fill="#fff" /><path d="M3 0v4M0 3l4 2" stroke="#fff" strokeWidth="1.500" />
        </svg>
        <Clock>12:32 PM<br />5/27/2024</Clock>
        <BlueBell><Glyph name="bell" size={12} label="Notifications" /></BlueBell>
      </SystemTray>
    </TaskBar>
  );
}

export default function App() {
  return (
    <Desktop>
      <GlobalStyle />
      <IdeBars />
      <WorkArea>
        <Documents>
          <TabStrip>
            <DocTab $active>
              Form2.cs [Design]
              <Glyph name="pin" size={8} />
              <Glyph name="close" size={8} />
            </DocTab>
            <DocTab>FrmMain.cs</DocTab>
            <TabTools>
              <Glyph name="caret" size={11} />
              <svg width="10" height="10" viewBox="0 0 16 16" fill="none" stroke="#f1f1f1" aria-hidden="true">
                <circle cx="8" cy="8" r="4.500" strokeWidth="2.500" />
                <circle cx="8" cy="8" r="6.800" strokeWidth="2.200" strokeDasharray="2.700 2.640" />
              </svg>
            </TabTools>
          </TabStrip>
          <Designer>
            <FormSurface><FormStrip /></FormSurface>
            <VScroll>
              <Glyph name="up" size={8} />
              <i />
              <Glyph name="down" size={8} />
            </VScroll>
          </Designer>
          <Tray>
            <TrayItem><Glyph name="tray" size={13} /></TrayItem>
            <VScroll>
              <Glyph name="up" size={8} />
              <Glyph name="down" size={8} />
            </VScroll>
          </Tray>
        </Documents>
        <Rail>
          <RailTab>Solution Explorer</RailTab>
        </Rail>
      </WorkArea>
      <Panels>
        <PanelBox title="Locals" tabs={["Locals", "Watch 1"]} active="Locals" />
        <PanelBox title="Error List" tabs={["Output", "Error List"]} active="Error List" />
      </Panels>
      <StatusBar>
        <Glyph name="parallelogram" size={13} />
        <span>Ready</span>
        <button>
          <Glyph name="push" size={10} />
          Add to Source Control
          <Glyph name="up" size={8} />
        </button>
        <Glyph name="bell" size={12} label="Notifications" />
      </StatusBar>
      <Taskbar />
      <OrderWindow />
    </Desktop>
  );
}
